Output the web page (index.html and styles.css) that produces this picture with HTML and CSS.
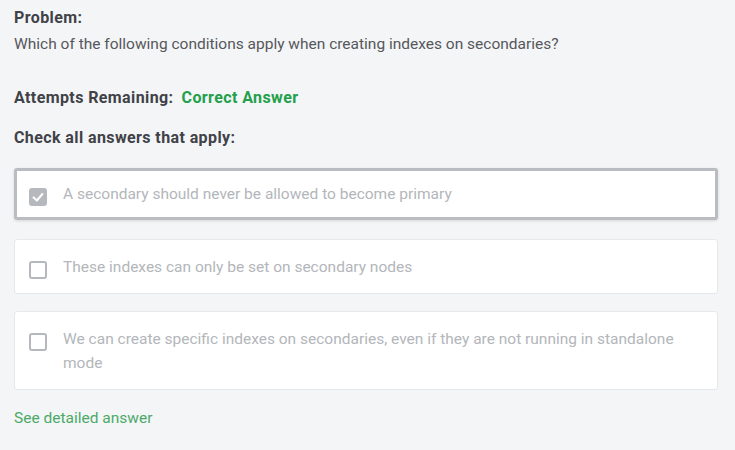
FILE: index.html
```html
<!DOCTYPE html>
<html>
<head>
<meta charset="utf-8">
<link rel="stylesheet" href="styles.css">
</head>
<body>
<div class="page">
  <div class="problem">
    <div class="label">Problem:</div>
    <div class="question">Which of the following conditions apply when creating indexes on secondaries?</div>
  </div>
  <div class="attempts"><span class="label">Attempts Remaining:</span><span class="label correct">Correct Answer</span></div>
  <div class="label check-all">Check all answers that apply:</div>
  <div class="answers">
    <div class="answer selected">
      <span class="box checked"><svg viewBox="0 0 18 18" width="18" height="18"><path d="M4.6 9.4 L7.9 12.5 L13.4 6" fill="none" stroke="#fff" stroke-width="2" stroke-linecap="round" stroke-linejoin="round"/></svg></span>
      <span class="text">A secondary should never be allowed to become primary</span>
    </div>
    <div class="answer second">
      <span class="box"></span>
      <span class="text">These indexes can only be set on secondary nodes</span>
    </div>
    <div class="answer third">
      <span class="box"></span>
      <span class="text">We can create specific indexes on secondaries, even if they are not running in standalone mode</span>
    </div>
  </div>
  <a class="detail" href="#">See detailed answer</a>
</div>
</body>
</html>
```
FILE: styles.css
```css
html, body {
  margin: 0;
  padding: 0;
  background: #f4f5f7;
}
body {
  font-family: Roboto, "Liberation Sans", sans-serif;
  color: #4d4f52;
}
.page {
  padding: 7px 17px 0 14px;
  display: flex;
  flex-direction: column;
}
.label {
  font-weight: 700;
  font-size: 16px;
  letter-spacing: 0.4px;
  line-height: 22px;
  color: #3f4247;
}
.question {
  margin-top: 3px;
  font-size: 15.5px;
  line-height: 24px;
  color: #56585c;
}
.attempts {
  margin-top: 31px;
  display: flex;
  gap: 8px;
}
.correct {
  color: #22a04b;
}
.check-all {
  margin-top: 18px;
}
.answers {
  margin-top: 19px;
  display: flex;
  flex-direction: column;
}
.answer {
  background: #fff;
  border: 1px solid #e6e8ea;
  border-radius: 3px;
  display: flex;
  align-items: flex-start;
  padding: 15px 16px 14px 14px;
  gap: 16px;
}
.answer.selected {
  border: 3px solid #b9bdc1;
  box-shadow: 0 1px 3px rgba(0,0,0,0.12);
  padding: 11px 14px 11px 12px;
}
.answer.second {
  margin-top: 19px;
}
.answer.third {
  margin-top: 17px;
}
.box {
  flex: none;
  width: 14px;
  height: 14px;
  border: 2px solid #b5b8bc;
  border-radius: 3px;
  margin-top: 6px;
  position: relative;
}
.box.checked {
  background: #b5b8bc;
}
.box svg {
  position: absolute;
  left: -2px;
  top: -2px;
}
.text {
  font-size: 15.5px;
  line-height: 24px;
  color: #b3b6ba;
}
.detail {
  margin-top: 17px;
  font-size: 15.5px;
  line-height: 22px;
  color: #4caa68;
  text-decoration: none;
  align-self: flex-start;
}
```
